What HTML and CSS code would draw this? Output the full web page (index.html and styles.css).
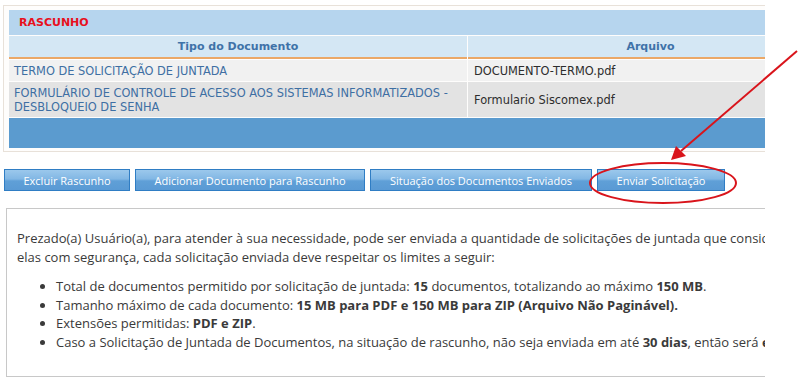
FILE: index.html
```html
<!DOCTYPE html>
<html lang="pt-BR">
<head>
    <meta charset="UTF-8">
    <title>Juntada de Documentos - Rascunho</title>
    <link rel="stylesheet" href="styles.css">
</head>
<body>
    <div class="page">
        <div class="draft-box">
            <table class="draft-table">
                <tr>
                    <td colspan="2" class="draft-title">RASCUNHO</td>
                </tr>
                <tr class="head-row">
                    <th class="col-tipo">Tipo do Documento</th>
                    <th class="col-arquivo">Arquivo</th>
                </tr>
                <tr class="row-odd">
                    <td class="tipo">TERMO DE SOLICITAÇÃO DE JUNTADA</td>
                    <td class="arquivo">DOCUMENTO-TERMO.pdf</td>
                </tr>
                <tr class="row-even">
                    <td class="tipo">FORMULÁRIO DE CONTROLE DE ACESSO AOS SISTEMAS INFORMATIZADOS - DESBLOQUEIO DE SENHA</td>
                    <td class="arquivo">Formulario Siscomex.pdf</td>
                </tr>
                <tr>
                    <td colspan="2" class="table-footer"></td>
                </tr>
            </table>
        </div>

        <div class="actions">
            <button class="action-btn btn-excluir">Excluir Rascunho</button>
            <button class="action-btn btn-adicionar">Adicionar Documento para Rascunho</button>
            <button class="action-btn btn-situacao">Situação dos Documentos Enviados</button>
            <button class="action-btn btn-enviar">Enviar Solicitação</button>
        </div>

        <div class="info-box">
            <p>Prezado(a) Usuário(a), para atender à sua necessidade, pode ser enviada a quantidade de solicitações de juntada que considerar necessária. Para processarmos todas<br>elas com segurança, cada solicitação enviada deve respeitar os limites a seguir:</p>
            <ul>
                <li>Total de documentos permitido por solicitação de juntada: <b>15</b> documentos, totalizando ao máximo <b>150 MB</b>.</li>
                <li>Tamanho máximo de cada documento: <b>15 MB para PDF e 150 MB para ZIP (Arquivo Não Paginável).</b></li>
                <li>Extensões permitidas: <b>PDF e ZIP</b>.</li>
                <li>Caso a Solicitação de Juntada de Documentos, na situação de rascunho, não seja enviada em até <b>30 dias</b>, então será <b>excluída</b>.</li>
            </ul>
        </div>
    </div>

    <svg class="annotation" width="801" height="381" viewBox="0 0 801 381">
        <line x1="797" y1="51" x2="681" y2="151" stroke="#d9141b" stroke-width="2"/>
        <polygon points="671,160 676,146 686,156" fill="#d9141b"/>
        <ellipse cx="663" cy="183" rx="73" ry="20" fill="none" stroke="#d9141b" stroke-width="2"/>
    </svg>
</body>
</html>
```

FILE: styles.css
```css
* {
    margin: 0;
    padding: 0;
    box-sizing: border-box;
}

body {
    font-family: 'DejaVu Sans', Verdana, sans-serif;
    background-color: #ffffff;
    color: #333;
    position: relative;
    width: 801px;
    height: 381px;
    overflow: hidden;
}

.page {
    width: 765px;
    overflow: hidden;
    padding: 5px 0 0 3px;
}

.draft-box {
    width: 840px;
    border: 1px solid #e8e1d9;
    padding: 4px 5px 3px 5px;
    background-color: #fefdfc;
}

.draft-table {
    width: 826px;
    border-collapse: separate;
    border-spacing: 1px;
    font-size: 11.4px;
    margin: -1px;
}

.draft-title {
    background-color: #b6d5ee;
    color: #e8101c;
    font-weight: bold;
    font-size: 11px;
    height: 25px;
    padding: 0 10px;
}

.head-row th {
    background-color: #d4e7f4;
    color: #3f72a8;
    font-weight: bold;
    font-size: 11px;
    height: 23px;
    border-bottom: 2px solid #eba867;
    text-align: center;
}

.col-tipo {
    width: 458px;
}

.row-odd td {
    background-color: #f1f1f1;
    height: 21px;
}

.row-even td {
    background-color: #e3e3e3;
    height: 35px;
}

.draft-table td.tipo {
    color: #3e6fa3;
    padding: 0 5px;
    line-height: 14px;
}

.draft-table td.arquivo {
    color: #2d2d2d;
    padding: 0 6px;
}

.table-footer {
    background-color: #5b9bcf;
    height: 30px;
}

.actions {
    display: flex;
    gap: 5px;
    margin-top: 17px;
    margin-left: 1px;
}

.action-btn {
    font-family: 'Open Sans', sans-serif;
    font-size: 11px;
    color: #ffffff;
    height: 22px;
    border: 1px solid #2f7dc4;
    background: linear-gradient(to bottom, #9bc8ec 0%, #82b7e4 45%, #5f9fd7 55%, #5a9ad4 100%);
    cursor: pointer;
}

.btn-excluir {
    width: 126px;
}

.btn-adicionar {
    width: 230px;
}

.btn-situacao {
    width: 222px;
}

.btn-enviar {
    width: 128px;
}

.info-box {
    width: 840px;
    margin: 17px 0 0 3px;
    border: 1px solid #c8c8c8;
    padding: 20px 10px 24px 10px;
    font-family: 'Open Sans', sans-serif;
    font-size: 13px;
    line-height: 18.6px;
    color: #3a3a3a;
    white-space: nowrap;
}

.info-box p {
    margin-bottom: 11px;
}

.info-box ul {
    padding-left: 39px;
}

.annotation {
    position: absolute;
    left: 0;
    top: 0;
    pointer-events: none;
}
```
